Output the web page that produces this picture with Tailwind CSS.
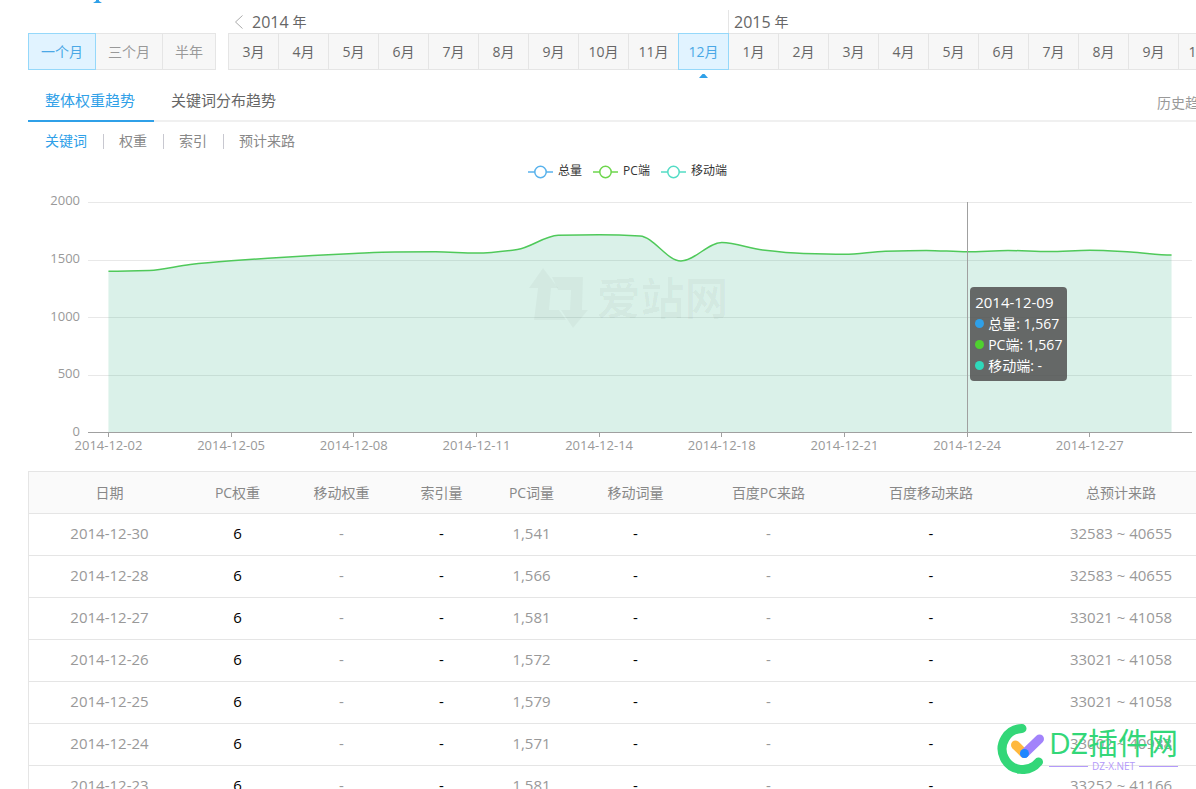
<!DOCTYPE html>
<html lang="zh-CN">
<head>
<meta charset="utf-8">
<title>权重趋势</title>
<script src="https://cdn.jsdelivr.net/npm/@tailwindcss/browser@4"></script>
</head>
<body class="relative h-screen overflow-hidden bg-white font-['Open_Sans','Noto_Sans_CJK_SC',sans-serif] text-sm leading-5 text-[#666]">
<main class="ml-7 -mr-[30px]">
  <div class="h-[10px]">
    <svg class="ml-[65px]" width="9" height="4" viewBox="0 0 9 4" fill="#2fa0e8"><path d="M3 0h3v1l3 2H0l3-2z"/></svg>
  </div>

  <section class="flex items-start gap-3 whitespace-nowrap">
    <div class="mt-[23px] flex h-[37px] text-[#999]">
      <button class="z-10 w-[68px] border border-[#95d8fa] bg-[#e1f3ff] text-[#4aa8e6]">一个月</button>
      <button class="w-[67px] border-y border-r border-[#e5e5e5] bg-[#f7f7f7]">三个月</button>
      <button class="w-[53px] border-y border-r border-[#e5e5e5] bg-[#f7f7f7]">半年</button>
    </div>
    <div class="flex">
      <div>
        <div class="flex h-[23px] items-center pl-1.5">
          <button aria-label="上一年" class="mr-2"><svg width="10" height="14" viewBox="0 0 10 14" fill="none" stroke="#aaa"><path d="M8.500 .5L1.500 7l7 6.500"/></svg></button>
          <span class="text-base leading-6">2014</span><span class="ml-1">年</span>
        </div>
        <div class="flex h-[37px]">
          <button class="w-[50px] border-y border-l border-[#e5e5e5] bg-[#f7f7f7]">3月</button>
          <button class="w-[50px] border-y border-l border-[#e5e5e5] bg-[#f7f7f7]">4月</button>
          <button class="w-[50px] border-y border-l border-[#e5e5e5] bg-[#f7f7f7]">5月</button>
          <button class="w-[50px] border-y border-l border-[#e5e5e5] bg-[#f7f7f7]">6月</button>
          <button class="w-[50px] border-y border-l border-[#e5e5e5] bg-[#f7f7f7]">7月</button>
          <button class="w-[50px] border-y border-l border-[#e5e5e5] bg-[#f7f7f7]">8月</button>
          <button class="w-[50px] border-y border-l border-[#e5e5e5] bg-[#f7f7f7]">9月</button>
          <button class="w-[50px] border-y border-l border-[#e5e5e5] bg-[#f7f7f7]">10月</button>
          <button class="w-[50px] border-y border-l border-[#e5e5e5] bg-[#f7f7f7]">11月</button>
          <button class="relative z-10 -mr-px w-[51px] border border-[#95d8fa] bg-[#e1f3ff] text-[#4aa8e6]">12月
            <svg class="absolute -bottom-[9px] left-5" width="9" height="4" viewBox="0 0 9 4" fill="#2fa0e8"><path d="M3.500 0h2L9 4H0z"/></svg>
          </button>
        </div>
      </div>
      <div>
        <div class="flex h-[23px] items-center border-l border-[#e5e5e5] pl-[5px]">
          <span class="text-base leading-6">2015</span><span class="ml-1">年</span>
        </div>
        <div class="flex h-[37px]">
          <button class="w-[50px] border-y border-l border-[#e5e5e5] bg-[#f7f7f7]">1月</button>
          <button class="w-[50px] border-y border-l border-[#e5e5e5] bg-[#f7f7f7]">2月</button>
          <button class="w-[50px] border-y border-l border-[#e5e5e5] bg-[#f7f7f7]">3月</button>
          <button class="w-[50px] border-y border-l border-[#e5e5e5] bg-[#f7f7f7]">4月</button>
          <button class="w-[50px] border-y border-l border-[#e5e5e5] bg-[#f7f7f7]">5月</button>
          <button class="w-[50px] border-y border-l border-[#e5e5e5] bg-[#f7f7f7]">6月</button>
          <button class="w-[50px] border-y border-l border-[#e5e5e5] bg-[#f7f7f7]">7月</button>
          <button class="w-[50px] border-y border-l border-[#e5e5e5] bg-[#f7f7f7]">8月</button>
          <button class="w-[50px] border-y border-l border-[#e5e5e5] bg-[#f7f7f7]">9月</button>
          <button class="w-[50px] border-y border-l border-[#e5e5e5] bg-[#f7f7f7]">10月</button>
        </div>
      </div>
    </div>
  </section>

  <nav class="mt-2.5 flex h-[42px] border-b-2 border-[#f0f0f0] text-[15px]">
    <a href="#" class="h-[42px] w-[126px] border-b-2 border-[#2fa0e8] pl-[17px] leading-[41px] text-[#2fa0e8]">整体权重趋势</a>
    <a href="#" class="pl-[17px] leading-[41px]">关键词分布趋势</a>
    <a href="#" class="mr-[13px] ml-auto pt-[3px] text-sm leading-10 text-[#999]">历史趋势</a>
  </nav>

  <nav class="mt-[9px] flex h-5 items-center gap-4 pl-[17px] text-[#888]">
    <a href="#" class="text-[#2fa0e8]">关键词</a>
    <span class="-mr-px h-[15px] w-px bg-[#c8c8d0]"></span>
    <a href="#">权重</a>
    <span class="-mr-px h-[15px] w-px bg-[#c8c8d0]"></span>
    <a href="#">索引</a>
    <span class="-mr-px h-[15px] w-px bg-[#c8c8d0]"></span>
    <a href="#">预计来路</a>
  </nav>

  <section class="mt-2.5">
    <div class="flex h-5 justify-center gap-[11px] pl-px text-xs leading-5 text-[#333]">
      <button class="flex gap-[5px]"><svg class="mt-1" width="25" height="14" fill="#fff" stroke="#58b2ec" stroke-width="1.500"><path d="M0 7h25"/><circle cx="12.500" cy="7" r="5.700"/></svg>总量</button>
      <button class="flex gap-[5px]"><svg class="mt-1" width="25" height="14" fill="#fff" stroke="#6dd64c" stroke-width="1.500"><path d="M0 7h25"/><circle cx="12.500" cy="7" r="5.700"/></svg>PC端</button>
      <button class="flex gap-[5px]"><svg class="mt-1" width="25" height="14" fill="#fff" stroke="#53dcc5" stroke-width="1.500"><path d="M0 7h25"/><circle cx="12.500" cy="7" r="5.700"/></svg>移动端</button>
    </div>

    <div class="mt-[21px] mr-[34px] flex">
      <div class="-my-[11px] flex w-[52px] flex-col justify-between pb-1 text-right text-[13px] leading-[18px] text-[#999]">
        <span>2000</span><span>1500</span><span>1000</span><span>500</span><span>0</span>
      </div>
      <div class="relative ml-2 h-[231px] flex-1">
        <svg class="block h-full w-full" viewBox="0 0 1104 231" preserveAspectRatio="none" fill="none">
          <g stroke="#e8e8e8"><path d="M0 .5H1104M0 58.500H1104M0 115.500H1104M0 173.500H1104"/></g>
          <path id="area" fill="#3cb58b" fill-opacity=".19"/>
          <path id="line" stroke="#4fc95a" stroke-width="1.500"/>
          <path d="M0 230.500H1104M879.500 0V231" stroke="#a0a0a0"/>
        </svg>
        <div class="absolute inset-x-0 top-[64px] flex items-center justify-center pr-[23px] text-black/3">
          <svg width="60" height="64" viewBox="0 0 60 64" fill="currentColor"><path d="M14 2L29 22H22L20 44H30L37 54H5L9 22H0z"/><path d="M23 11H54L53 44H59L44 62L32 44H41L42 24H29z"/></svg>
          <span class="ml-2 text-[44px] leading-[64px] font-bold">爱站网</span>
        </div>
        <div class="absolute top-[85px] left-[80%] -ml-px h-[94px] rounded bg-[#505050]/85 px-[5px] pt-[5px] text-sm leading-[21px] whitespace-nowrap text-white">
          <p class="text-[15px] leading-[21px]">2014-12-09</p>
          <p class="flex items-center gap-1"><i class="size-[9px] rounded-full bg-[#2fa0e8]"></i>总量: 1,567</p>
          <p class="flex items-center gap-1"><i class="size-[9px] rounded-full bg-[#4fd12f]"></i>PC端: 1,567</p>
          <p class="flex items-center gap-1"><i class="size-[9px] rounded-full bg-[#2fd9bb]"></i>移动端: -</p>
        </div>
      </div>
    </div>
    <div class="mr-[34px] ml-[60px] grid grid-cols-9 text-[13px] leading-4 whitespace-nowrap text-[#999]">
      <div class="flex w-1/3 flex-col items-center"><i class="h-1 w-px bg-[#a0a0a0]"></i>2014-12-02</div>
      <div class="flex w-1/3 flex-col items-center"><i class="h-1 w-px bg-[#a0a0a0]"></i>2014-12-05</div>
      <div class="flex w-1/3 flex-col items-center"><i class="h-1 w-px bg-[#a0a0a0]"></i>2014-12-08</div>
      <div class="flex w-1/3 flex-col items-center"><i class="h-1 w-px bg-[#a0a0a0]"></i>2014-12-11</div>
      <div class="flex w-1/3 flex-col items-center"><i class="h-1 w-px bg-[#a0a0a0]"></i>2014-12-14</div>
      <div class="flex w-1/3 flex-col items-center"><i class="h-1 w-px bg-[#a0a0a0]"></i>2014-12-18</div>
      <div class="flex w-1/3 flex-col items-center"><i class="h-1 w-px bg-[#a0a0a0]"></i>2014-12-21</div>
      <div class="flex w-1/3 flex-col items-center"><i class="h-1 w-px bg-[#a0a0a0]"></i>2014-12-24</div>
      <div class="flex w-1/3 flex-col items-center"><i class="h-1 w-px bg-[#a0a0a0]"></i>2014-12-27</div>
    </div>
  </section>

  <table class="mt-[18px] w-full table-fixed border-separate border-spacing-0 border-t border-l border-[#e5e5e5] text-center text-[15px] whitespace-nowrap text-[#999]">
    <colgroup><col class="w-[163px]"><col class="w-[93px]"><col class="w-[115px]"><col class="w-[85px]"><col class="w-[95px]"><col class="w-[113px]"><col class="w-[153px]"><col class="w-[172px]"><col class="w-[208px]"></colgroup>
    <thead class="bg-[#fafafa] text-sm text-[#888]">
      <tr class="h-[42px] *:border-b *:border-[#e5e5e5] *:pr-0.5 *:pl-0 *:font-normal"><th>日期</th><th>PC权重</th><th>移动权重</th><th>索引量</th><th>PC词量</th><th>移动词量</th><th>百度PC来路</th><th>百度移动来路</th><th>总预计来路</th></tr>
    </thead>
    <tbody>
      <tr class="h-[42px] *:border-b *:border-[#e5e5e5] *:pt-0 *:pr-0.5 *:pb-[3px] *:pl-0"><td>2014-12-30</td><td class="text-black">6</td><td>-</td><td class="text-black">-</td><td>1,541</td><td class="text-black">-</td><td>-</td><td class="text-black">-</td><td>32583 ~ 40655</td></tr>
      <tr class="h-[42px] *:border-b *:border-[#e5e5e5] *:pt-0 *:pr-0.5 *:pb-[3px] *:pl-0"><td>2014-12-28</td><td class="text-black">6</td><td>-</td><td class="text-black">-</td><td>1,566</td><td class="text-black">-</td><td>-</td><td class="text-black">-</td><td>32583 ~ 40655</td></tr>
      <tr class="h-[42px] *:border-b *:border-[#e5e5e5] *:pt-0 *:pr-0.5 *:pb-[3px] *:pl-0"><td>2014-12-27</td><td class="text-black">6</td><td>-</td><td class="text-black">-</td><td>1,581</td><td class="text-black">-</td><td>-</td><td class="text-black">-</td><td>33021 ~ 41058</td></tr>
      <tr class="h-[42px] *:border-b *:border-[#e5e5e5] *:pt-0 *:pr-0.5 *:pb-[3px] *:pl-0"><td>2014-12-26</td><td class="text-black">6</td><td>-</td><td class="text-black">-</td><td>1,572</td><td class="text-black">-</td><td>-</td><td class="text-black">-</td><td>33021 ~ 41058</td></tr>
      <tr class="h-[42px] *:border-b *:border-[#e5e5e5] *:pt-0 *:pr-0.5 *:pb-[3px] *:pl-0"><td>2014-12-25</td><td class="text-black">6</td><td>-</td><td class="text-black">-</td><td>1,579</td><td class="text-black">-</td><td>-</td><td class="text-black">-</td><td>33021 ~ 41058</td></tr>
      <tr class="h-[42px] *:border-b *:border-[#e5e5e5] *:pt-0 *:pr-0.5 *:pb-[3px] *:pl-0"><td>2014-12-24</td><td class="text-black">6</td><td>-</td><td class="text-black">-</td><td>1,571</td><td class="text-black">-</td><td>-</td><td class="text-black">-</td><td>33002 ~ 40938</td></tr>
      <tr class="h-[42px] *:border-b *:border-[#e5e5e5] *:pt-0 *:pr-0.5 *:pb-[3px] *:pl-0"><td>2014-12-23</td><td class="text-black">6</td><td>-</td><td class="text-black">-</td><td>1,581</td><td class="text-black">-</td><td>-</td><td class="text-black">-</td><td>33252 ~ 41166</td></tr>
    </tbody>
  </table>
</main>

<!-- Site badge over the table -->
<aside class="absolute right-[18px] bottom-[15px] flex gap-[3px] whitespace-nowrap">
  <svg width="49" height="50" viewBox="0 0 49 50" fill="none" stroke-linecap="round" stroke-width="9">
    <path d="M25 4.500A20.500 20.500 0 1 0 41.500 38" stroke="#33d778"/>
    <path d="M18.500 21L27 29.500" stroke="#ffb83d"/>
    <path d="M27.500 29.500L42.500 15" stroke="#a283fb"/>
    <circle cx="27.500" cy="29.500" r="4.500" fill="#1e86ff"/>
  </svg>
  <div>
    <p class="text-[30px] leading-[37px] text-[#33d778]">DZ插件网</p>
    <p class="flex items-center gap-1 text-[10px] leading-[10px] text-[#b49afa]"><i class="h-px flex-1 bg-[#b49afa]"></i>DZ-X.NET<i class="h-px flex-1 bg-[#b49afa]"></i></p>
  </div>
</aside>

<script>
  // Monotone cubic curve through the daily totals (heights in plot units)
  const ys = [69.3,68.5,62.5,58.8,56,53.5,51.5,50,49.8,51,47.5,33.3,32.7,34,59,40.500,48,51.5,52.3,49.3,48.4,49.8,48.5,49.5,48.3,50,53];
  const step = 1104 / ys.length, n = ys.length;
  const x = i => (i + 0.5) * step;
  const m = ys.map((_, i) => {
    if (i === 0 || i === n - 1) return 0;
    const a = ys[i] - ys[i - 1], b = ys[i + 1] - ys[i];
    return a * b <= 0 ? 0 : 2 * a * b / (a + b);
  });
  let d = `M${x(0)} ${ys[0]}`;
  for (let i = 1; i < n; i++) {
    d += `C${x(i - 1) + step / 3} ${ys[i - 1] + m[i - 1] / 3} ${x(i) - step / 3} ${ys[i] - m[i] / 3} ${x(i)} ${ys[i]}`;
  }
  document.getElementById('line').setAttribute('d', d);
  document.getElementById('area').setAttribute('d', d + `V230H${x(0)}Z`);
</script>
</body>
</html>
